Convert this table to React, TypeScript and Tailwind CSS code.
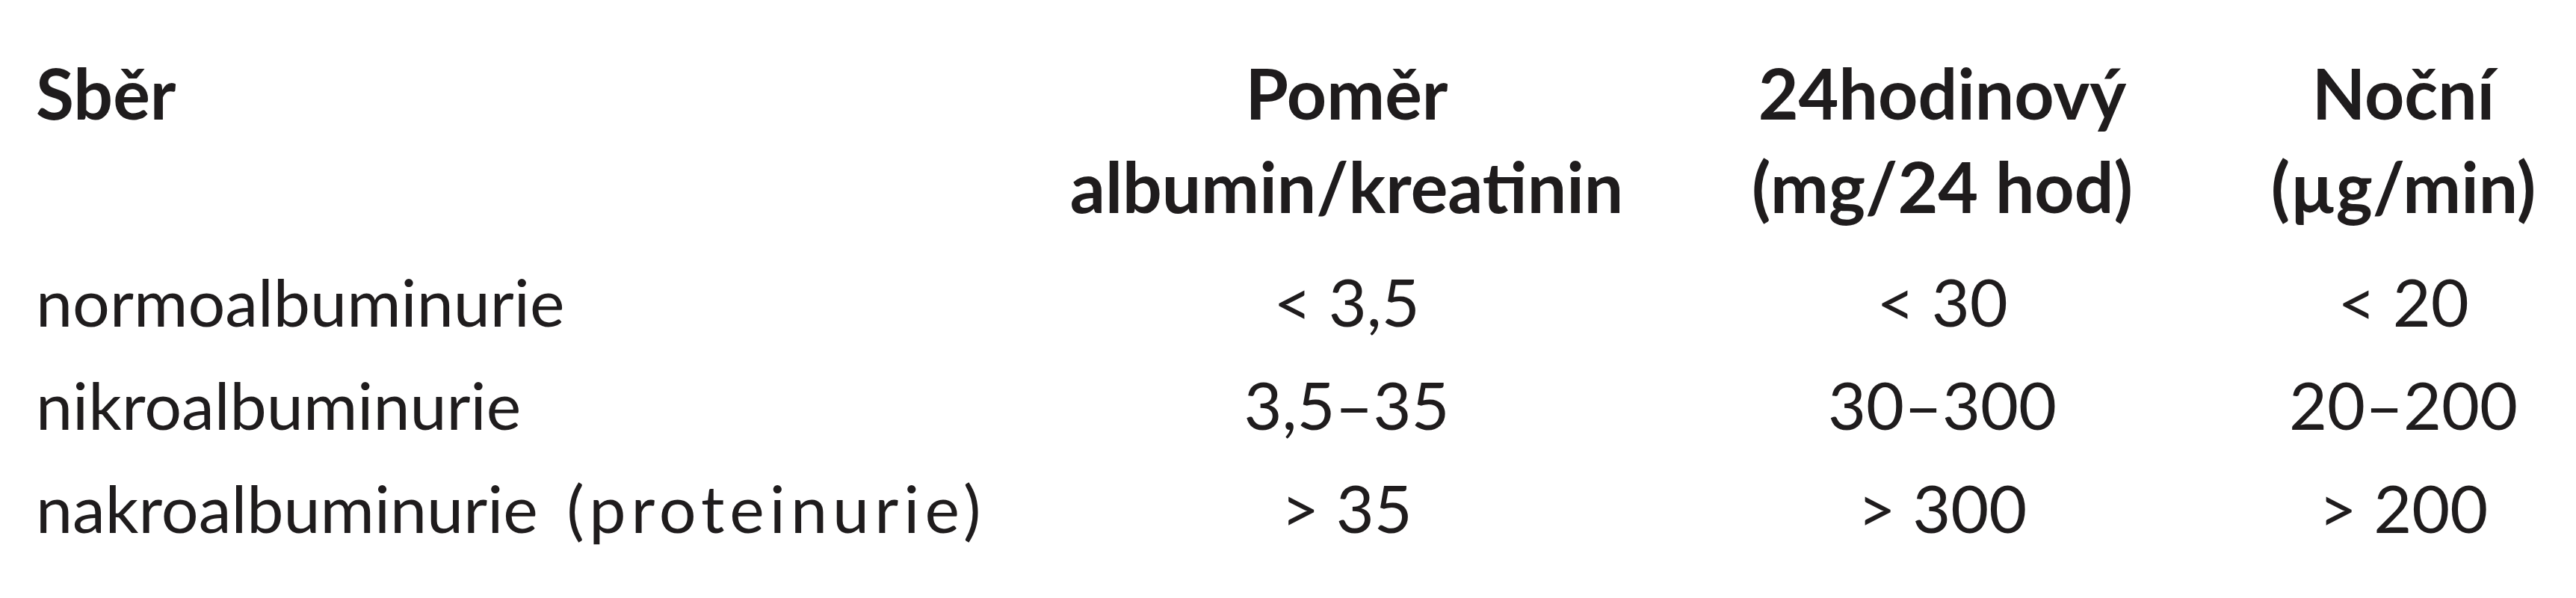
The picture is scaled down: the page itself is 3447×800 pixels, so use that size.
import React from "react";

const rows: [React.ReactNode, string, string, string][] = [
  ["normoalbuminurie", "< 3,5", "< 30", "< 20"],
  ["nikroalbuminurie", "3,5–35", "30–300", "20–200"],
  [
    <>
      nakroalbuminurie <span className="ml-[16px] tracking-[0.08em]">(proteinurie)</span>
    </>,
    "> 35",
    "> 300",
    "> 200",
  ],
];

export default function App() {
  return (
    <div
      className="w-[3447px] h-[800px] bg-white text-[#1f1c1d] pl-[48px] pt-[62px]"
      style={{ fontFamily: "Lato, 'Noto Sans', sans-serif" }}
    >
      <div className="grid grid-cols-[1364px_780px_814px_420px] text-[93px] font-bold leading-[125px]">
        <div className="text-left">Sběr</div>
        <div className="text-center">
          <div>Poměr</div>
          <div>albumin/kreatinin</div>
        </div>
        <div className="text-center">
          <div>24hodinový</div>
          <div>(mg/24 hod)</div>
        </div>
        <div className="text-center">
          <div>Noční</div>
          <div>(µg/min)</div>
        </div>
      </div>
      <div className="mt-[22px] flex flex-col text-[88px] font-normal leading-[138px]">
        {rows.map((r, i) => (
          <div key={i} className="grid grid-cols-[1364px_780px_814px_420px]">
            <div className="text-left">{r[0]}</div>
            <div className="text-center">{r[1]}</div>
            <div className="text-center">{r[2]}</div>
            <div className="text-center">{r[3]}</div>
          </div>
        ))}
      </div>
    </div>
  );
}
